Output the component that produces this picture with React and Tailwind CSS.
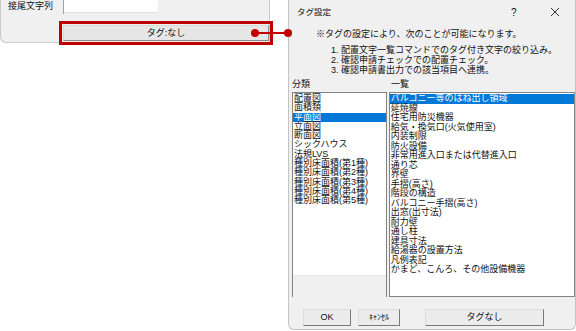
import React from 'react';

const leftItems = [
  '配置図', '面積類', '平面図', '立面図', '断面図', 'シックハウス', '法規LVS',
  '種別床面積(第1種)', '種別床面積(第2種)', '種別床面積(第3種)', '種別床面積(第4種)', '種別床面積(第5種)',
];

const rightItems = [
  'バルコニー等のはね出し領域', '延焼線', '住宅用防災機器', '給気・換気口(火気使用室)', '内装制限', '防火設備',
  '非常用進入口または代替進入口', '通り芯', '界壁', '手摺(高さ)', '階段の構造', 'バルコニー手摺(高さ)',
  '出窓(出寸法)', '耐力壁', '通し柱', '建具寸法', '給湯器の設置方法', '凡例表記', 'かまど、こんろ、その他設備機器',
];

const font = { fontFamily: '"Liberation Sans", "Noto Sans CJK JP", sans-serif' };

const App = () => {
  return (
    <div className="relative w-[576px] h-[331px] bg-white overflow-hidden text-[#111] flex" style={font}>
      {/* 左側：元のパネル */}
      <div className="w-[288px] shrink-0">
        <div className="w-[270px] h-[43px] bg-[#f0f0f0] border-l border-r border-b border-[#c9c9c9] rounded-bl-[6px] relative">
          <div className="flex h-[14px]">
            <div className="w-[63px] pl-[7px] text-[9px] leading-[13px] border-r border-[#a0a0a0]">接尾文字列</div>
            <div className="w-[94px] h-[13px] bg-white border-b border-[#e0e0e0]" />
          </div>
          <div className="ml-[58px] mt-[7px] w-[214px] h-[24px] border-[3px] border-[#c00000] p-[1px]">
            <div className="h-full bg-[#e6e6e6] border border-[#8a8a8a] border-t-[#d8d8d8] border-l-[#d8d8d8] flex items-center justify-center text-[9px] leading-none">
              タグ:なし
            </div>
          </div>
        </div>
      </div>

      {/* 右側：タグ設定ダイアログ */}
      <div className="w-[288px] h-[330px] bg-[#f0f0f0] border-l border-r border-b border-[#c4c4c4] rounded-b-[6px] flex flex-col">
        <div className="h-[24px] flex items-center pl-[8px] pr-[12px] text-[8.5px]">
          <span className="flex-1">タグ設定</span>
          <span className="w-[39px] text-[10px]">?</span>
          <svg width="10" height="10" viewBox="0 0 10 10" className="mr-[3px]">
            <path d="M1 1 L9 9 M9 1 L1 9" stroke="#333" strokeWidth="1" />
          </svg>
        </div>
        <div className="pl-[27px] text-[9px] leading-[10px] pt-[5px]">※タグの設定により、次のことが可能になります。</div>
        <div className="pl-[42px] text-[9px] leading-[10px] pt-[6px]">
          <div>1. 配置文字一覧コマンドでのタグ付き文字の絞り込み。</div>
          <div>2. 確認申請チェックでの配置チェック。</div>
          <div>3. 確認申請書出力での該当項目へ連携。</div>
        </div>
        <div className="flex text-[9px] leading-[10px] pt-[4px] pl-[3px]">
          <div className="w-[99px]">分類</div>
          <div>一覧</div>
        </div>
        <div className="flex gap-[2px] pl-[3px] pt-[3px]">
          <div className="w-[95px] h-[205px] border-x border-t border-[#838383] flex flex-col">
            <div className="h-[183px] bg-white pt-[1px] text-[9px] leading-[9.3px] border-b border-[#e8e8e8]">
              {leftItems.map((t, i) => (
                <div key={t} className={i === 2 ? 'bg-[#0078d7] text-white pl-[1px]' : 'pl-[1px]'}>{t}</div>
              ))}
            </div>
          </div>
          <div className="w-[187px] h-[205px] border border-[#838383] bg-white pt-[1px] text-[9px] leading-[9.5px]">
            {rightItems.map((t, i) => (
              <div key={t} className={i === 0 ? 'bg-[#0078d7] text-white pl-[1px]' : 'pl-[1px]'}>{t}</div>
            ))}
          </div>
        </div>
        <div className="flex items-center pt-[12px] pl-[14px] text-[9px]">
          <div className="w-[48px] h-[17px] bg-[#ececec] border border-[#7a7a7a] border-t-[#dcdcdc] border-l-[#dcdcdc] flex items-center justify-center">OK</div>
          <div className="ml-[7px] w-[42px] h-[17px] bg-[#ececec] border border-[#7a7a7a] border-t-[#dcdcdc] border-l-[#dcdcdc] flex items-center justify-center text-[8px]">ｷｬﾝｾﾙ</div>
          <div className="ml-[25px] w-[119px] h-[17px] bg-[#ececec] border border-[#7a7a7a] border-t-[#dcdcdc] border-l-[#dcdcdc] flex items-center justify-center">タグなし</div>
        </div>
      </div>

      {/* 引き出し線 */}
      <div className="absolute left-[255px] top-[32px] w-[33px] h-[2px] bg-[#c00000]" />
      <div className="absolute left-[251px] top-[29px] w-[8px] h-[8px] rounded-full bg-[#c00000]" />
      <div className="absolute left-[284px] top-[29px] w-[8px] h-[8px] rounded-full bg-[#c00000]" />
    </div>
  );
};

export default App;
